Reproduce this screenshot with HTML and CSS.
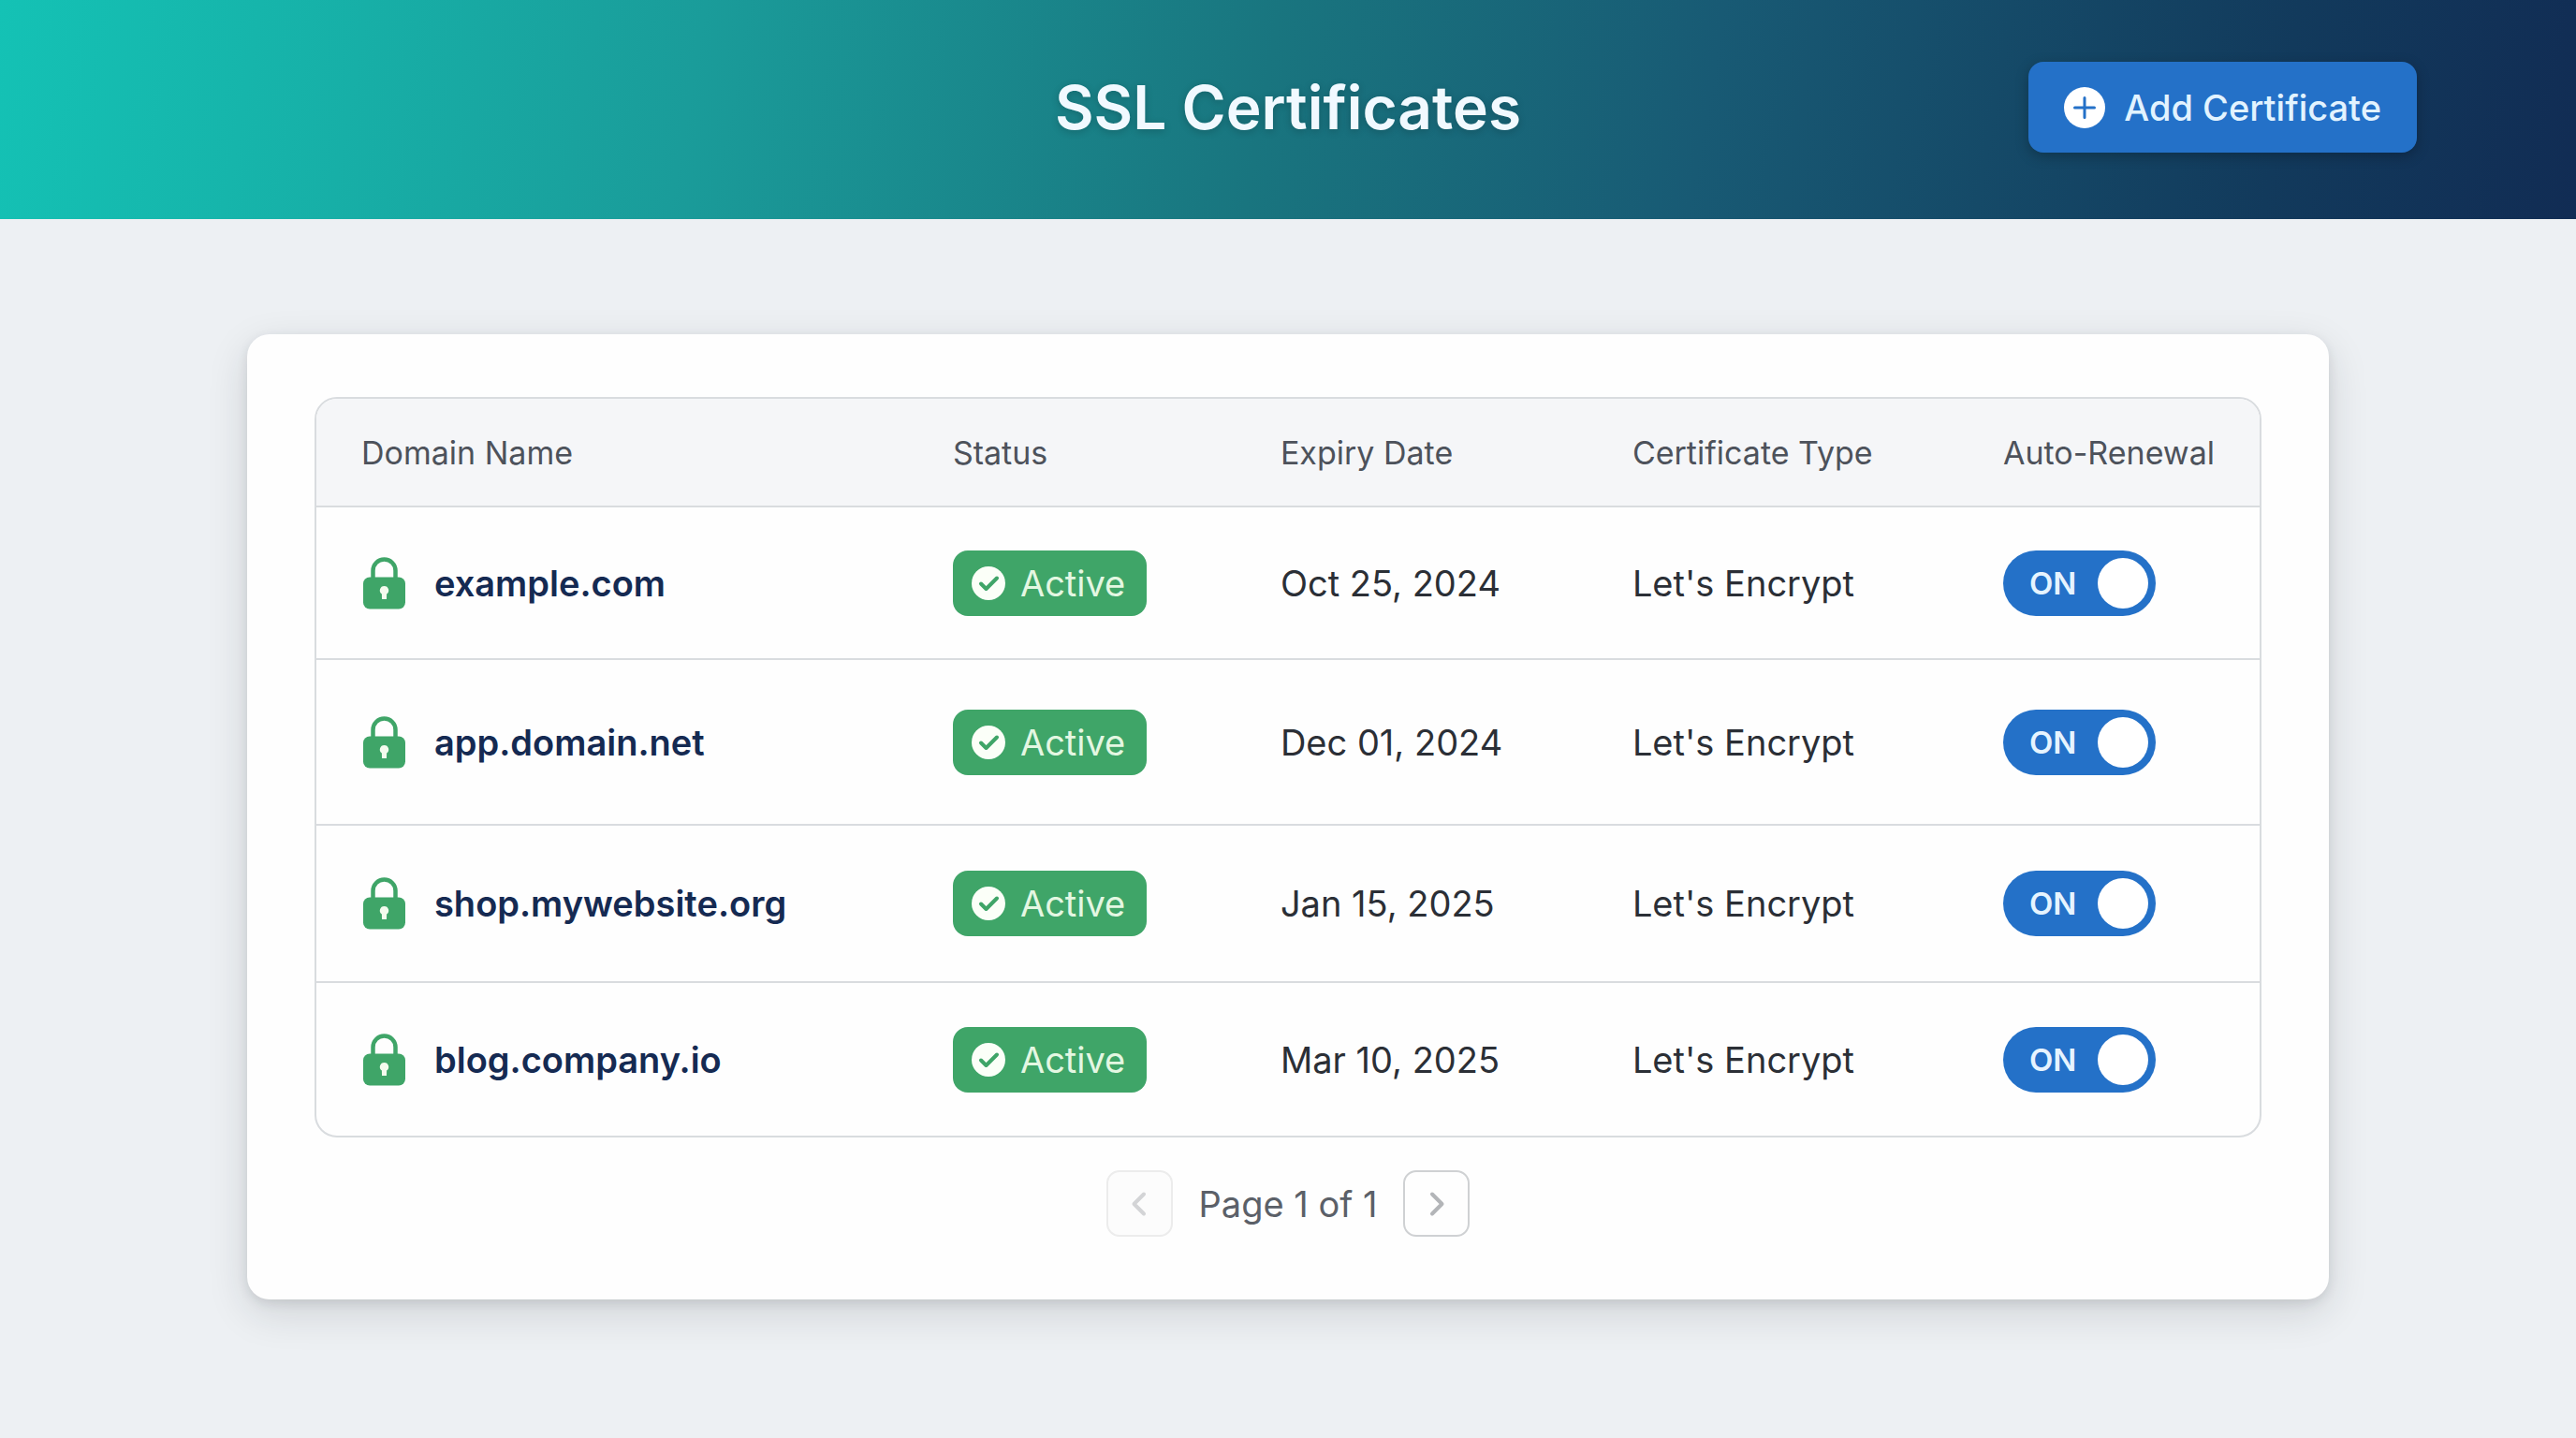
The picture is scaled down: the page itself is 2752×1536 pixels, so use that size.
FILE: index.html
```html
<!DOCTYPE html>
<html lang="en">
<head>
    <meta charset="UTF-8">
    <meta name="viewport" content="width=device-width, initial-scale=1.0">
    <title>SSL Certificates</title>
    <link rel="stylesheet" href="styles.css">
</head>
<body>
    <!-- Shared icons -->
    <svg class="sprite" aria-hidden="true">
        <symbol id="icon-lock" viewBox="0 0 48 56">
            <path d="M12.500 24V14.500a12 12 0 0 1 24 0V24" fill="none" stroke="#3fa568" stroke-width="4.500"/>
            <rect x="2" y="21.500" width="45" height="34" rx="7" fill="#3fa568"/>
            <path d="M24.500 31a4.700 4.700 0 0 0-2.600 8.600L22 45h5l.1-5.400A4.700 4.700 0 0 0 24.500 31z" fill="#f4fbee"/>
        </symbol>
        <symbol id="icon-check" viewBox="0 0 36 36">
            <circle cx="18" cy="18" r="18" fill="#fbfff8"/>
            <path d="M10 18.500l5.500 5.500L27 12.500" fill="none" stroke="#3fa568" stroke-width="4" stroke-linecap="round" stroke-linejoin="round"/>
        </symbol>
    </svg>

    <header class="header">
        <h1>SSL Certificates</h1>
        <button type="button" class="add-btn">
            <svg class="add-icon" viewBox="0 0 44 44" aria-hidden="true">
                <circle cx="22" cy="22" r="22" fill="#fff"/>
                <path d="M22 11.500v21M11.500 22h21" stroke="#2471c8" stroke-width="3" stroke-linecap="round"/>
            </svg>
            Add Certificate
        </button>
    </header>

    <main class="container">
        <section class="card">
            <table class="cert-table">
                <colgroup>
                    <col class="col-domain">
                    <col class="col-status">
                    <col class="col-expiry">
                    <col class="col-type">
                    <col class="col-renewal">
                </colgroup>
                <thead>
                    <tr>
                        <th scope="col">Domain Name</th>
                        <th scope="col">Status</th>
                        <th scope="col">Expiry Date</th>
                        <th scope="col">Certificate Type</th>
                        <th scope="col">Auto-Renewal</th>
                    </tr>
                </thead>
                <tbody>
                    <tr>
                        <td><div class="domain"><svg class="lock"><use href="#icon-lock"/></svg>example.com</div></td>
                        <td><span class="badge"><svg class="check"><use href="#icon-check"/></svg>Active</span></td>
                        <td>Oct 25, 2024</td>
                        <td>Let's Encrypt</td>
                        <td>
                            <label class="toggle">
                                <input type="checkbox" role="switch" aria-label="Auto-renewal for example.com" checked>
                                <span>ON</span>
                            </label>
                        </td>
                    </tr>
                    <tr>
                        <td><div class="domain"><svg class="lock"><use href="#icon-lock"/></svg>app.domain.net</div></td>
                        <td><span class="badge"><svg class="check"><use href="#icon-check"/></svg>Active</span></td>
                        <td>Dec 01, 2024</td>
                        <td>Let's Encrypt</td>
                        <td>
                            <label class="toggle">
                                <input type="checkbox" role="switch" aria-label="Auto-renewal for app.domain.net" checked>
                                <span>ON</span>
                            </label>
                        </td>
                    </tr>
                    <tr>
                        <td><div class="domain"><svg class="lock"><use href="#icon-lock"/></svg>shop.mywebsite.org</div></td>
                        <td><span class="badge"><svg class="check"><use href="#icon-check"/></svg>Active</span></td>
                        <td>Jan 15, 2025</td>
                        <td>Let's Encrypt</td>
                        <td>
                            <label class="toggle">
                                <input type="checkbox" role="switch" aria-label="Auto-renewal for shop.mywebsite.org" checked>
                                <span>ON</span>
                            </label>
                        </td>
                    </tr>
                    <tr>
                        <td><div class="domain"><svg class="lock"><use href="#icon-lock"/></svg>blog.company.io</div></td>
                        <td><span class="badge"><svg class="check"><use href="#icon-check"/></svg>Active</span></td>
                        <td>Mar 10, 2025</td>
                        <td>Let's Encrypt</td>
                        <td>
                            <label class="toggle">
                                <input type="checkbox" role="switch" aria-label="Auto-renewal for blog.company.io" checked>
                                <span>ON</span>
                            </label>
                        </td>
                    </tr>
                </tbody>
            </table>

            <nav class="pagination" aria-label="Pagination">
                <button type="button" class="page-btn" aria-label="Previous page" disabled>
                    <svg viewBox="0 0 24 28" aria-hidden="true"><path d="M17 3.500L6.500 14 17 24.500"/></svg>
                </button>
                <span class="page-info">Page 1 of 1</span>
                <button type="button" class="page-btn" aria-label="Next page">
                    <svg viewBox="0 0 24 28" aria-hidden="true"><path d="M7 3.500L17.500 14 7 24.500"/></svg>
                </button>
            </nav>
        </section>
    </main>
</body>
</html>
```
FILE: styles.css
```css
* {
    box-sizing: border-box;
}

body {
    margin: 0;
    min-height: 100vh;
    font-family: 'Inter', 'Liberation Sans', sans-serif;
    font-size: 38px;
    color: #2b2f36;
    background-color: #edf0f3;
}

button, input {
    font: inherit;
    margin: 0;
}

.sprite {
    display: none;
}

/* Header */
.header {
    display: grid;
    grid-template-columns: 1fr auto 1fr;
    align-items: center;
    padding: 66px 170px 71px;
    background: linear-gradient(100deg, #14c2b5 0%, #16b5ab 10%, #1a9c9a 27%, #19757f 49%, #185a74 66%, #123a5c 88%, #112c54 100%);
}

.header h1 {
    grid-column: 2;
    margin: 0;
    font-size: 64px;
    line-height: 80px;
    font-weight: 600;
    color: #f1f9ff;
    text-shadow: 0 2px 8px rgba(0, 0, 0, 0.2);
}

.add-btn {
    justify-self: end;
    display: flex;
    align-items: center;
    gap: 20px;
    height: 97px;
    padding: 0 38px;
    border: none;
    border-radius: 16px;
    background-color: #2471c8;
    color: #e2f3ff;
    font-size: 38px;
    font-weight: 500;
    box-shadow: 0 4px 14px rgba(0, 0, 0, 0.25);
    cursor: pointer;
}

.add-icon {
    width: 44px;
    height: 44px;
}

/* Card */
.container {
    padding: 123px 264px 148px;
}

.card {
    padding: 67px 72px;
    border-radius: 24px;
    background-color: #fefefe;
    box-shadow: 0 14px 44px rgba(30, 34, 42, 0.14), 0 4px 12px rgba(30, 34, 42, 0.1);
}

/* Table */
.cert-table {
    width: 100%;
    table-layout: fixed;
    border: 2px solid #d9dcdf;
    border-collapse: separate;
    border-spacing: 0;
    border-radius: 24px;
    overflow: hidden;
}

.col-domain { width: 30.44%; }
.col-status { width: 16.86%; }
.col-expiry { width: 18.11%; }
.col-type { width: 19.08%; }
.col-renewal { width: 15.51%; }

.cert-table th,
.cert-table td {
    padding: 0 0 0 48px;
    text-align: left;
    vertical-align: middle;
    white-space: nowrap;
    border-bottom: 2px solid #d9dcdf;
}

.cert-table th {
    height: 116px;
    background-color: #f5f6f8;
    color: #4d525b;
    font-size: 34px;
    font-weight: 400;
}

.cert-table td {
    height: 163px;
}

.cert-table tr:nth-child(2) td {
    height: 177px;
}

.cert-table tr:nth-child(3) td {
    height: 168px;
}

.cert-table tbody tr:last-child td {
    border-bottom: none;
}

.domain {
    display: flex;
    align-items: center;
    gap: 30px;
    font-weight: 600;
    color: #152a52;
}

.lock {
    width: 48px;
    height: 56px;
}

.badge {
    display: inline-flex;
    align-items: center;
    gap: 16px;
    height: 70px;
    padding: 0 23px 0 20px;
    border-radius: 16px;
    background-color: #3fa568;
    color: #e4f7e2;
    vertical-align: middle;
}

.check {
    width: 36px;
    height: 36px;
}

/* Toggle switch */
.toggle {
    display: inline-grid;
    align-items: center;
    vertical-align: middle;
    cursor: pointer;
}

.toggle input,
.toggle span {
    grid-area: 1 / 1;
}

.toggle input {
    appearance: none;
    display: flex;
    justify-content: flex-end;
    width: 163px;
    height: 70px;
    padding: 8px;
    border-radius: 35px;
    background-color: #2471c8;
    cursor: pointer;
}

.toggle input::after {
    content: '';
    width: 54px;
    height: 54px;
    border-radius: 50%;
    background-color: #fff;
}

.toggle span {
    padding-left: 28px;
    font-size: 33px;
    font-weight: 600;
    color: #e6f4ff;
}

/* Pagination */
.pagination {
    display: flex;
    justify-content: center;
    align-items: center;
    gap: 28px;
    margin-top: 35px;
}

.page-btn {
    display: flex;
    align-items: center;
    justify-content: center;
    width: 71px;
    height: 71px;
    padding: 0;
    border: 2px solid #cfd1d3;
    border-radius: 14px;
    background-color: #fefefe;
    cursor: pointer;
}

.page-btn svg {
    width: 24px;
    height: 28px;
    fill: none;
    stroke: #b3b5b8;
    stroke-width: 4;
    stroke-linecap: round;
    stroke-linejoin: round;
}

.page-btn:disabled {
    border-color: #ececec;
    background-color: #fcfcfc;
    cursor: default;
}

.page-btn:disabled svg {
    stroke: #d3d4d6;
}

.page-info {
    color: #5b6068;
}
```
